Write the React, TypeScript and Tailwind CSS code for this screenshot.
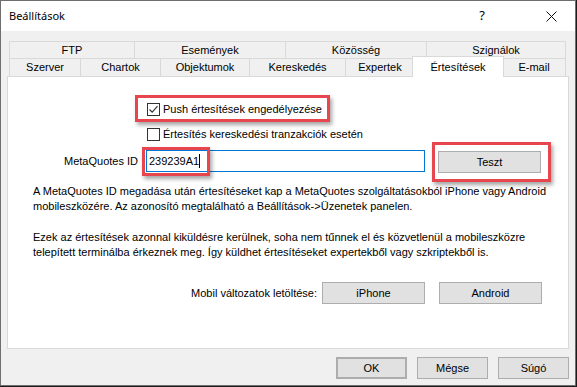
import React from "react";

const Checkbox = ({ checked }: { checked?: boolean }) => (
  <span className="w-[13px] h-[13px] border border-[#333333] bg-white flex items-center justify-center shrink-0">
    {checked && (
      <svg width="11" height="11" viewBox="0 0 11 11">
        <path d="M1.5 5.5 L4.2 8.2 L9.5 2.2" fill="none" stroke="#333" strokeWidth="1.2" />
      </svg>
    )}
  </span>
);

const Highlight = ({ className }: { className: string }) => (
  <span
    className={`absolute border-[3px] border-[#e8464f] shadow-[2px_3px_4px_rgba(0,0,0,0.35)] pointer-events-none ${className}`}
  />
);

const Btn = ({ label, className = "" }: { label: string; className?: string }) => (
  <button className={`h-[22px] bg-[#e1e1e1] border border-[#adadad] text-[11px] text-black flex items-center justify-center ${className}`}>
    {label}
  </button>
);

const topTabs = [
  ["FTP", "w-[125px]"],
  ["Események", "w-[151px]"],
  ["Közösség", "w-[141px]"],
  ["Szignálok", "w-[140px] border-r"],
];

const bottomTabs = [
  ["Szerver", "w-[71px]"],
  ["Chartok", "w-[80px]"],
  ["Objektumok", "w-[89px]"],
  ["Kereskedés", "w-[96px]"],
  ["Expertek", "w-[69px]"],
];

export default function App() {
  return (
    <div className="w-[577px] h-[387px] bg-[#1c1c1c] overflow-hidden font-['Liberation_Sans',Arial,sans-serif] text-black">
      <div className="w-[576px] h-[386px] border border-[#6e6e6e] bg-[#f0f0f0] flex flex-col">
        {/* title bar */}
        <div className="h-[30px] bg-white flex items-center shrink-0">
          <span className="ml-[8px] text-[11px] font-['Noto_Sans',sans-serif]">Beállítások</span>
          <span className="ml-auto mr-[61px] text-[13px] font-['Noto_Sans',sans-serif]">?</span>
          <svg className="mr-[18px]" width="11" height="11" viewBox="0 0 11 11">
            <path d="M0.5 0.5 L10.5 10.5 M10.5 0.5 L0.5 10.5" stroke="#111" strokeWidth="1" />
          </svg>
        </div>

        <div className="pt-[10px] text-[11px]">
          {/* tabs */}
          <div className="ml-[8px] w-[557px]">
            <div className="flex h-[17px]">
              {topTabs.map(([t, w]) => (
                <div key={t} className={`${w} border-l border-t border-[#d9d9d9] flex items-center justify-center`}>
                  {t}
                </div>
              ))}
            </div>
            <div className="flex h-[18px]">
              {bottomTabs.map(([t, w]) => (
                <div key={t} className={`${w} border-l border-t border-[#d9d9d9] flex items-center justify-center`}>
                  {t}
                </div>
              ))}
              <div className="relative z-10 w-[92px] -mx-[2px] -mt-[2px] h-[21px] bg-white border-x border-t border-[#d9d9d9] flex items-start justify-center pt-[2px]">
                Értesítések
              </div>
              <div className="w-[64px] border-l border-t border-r border-[#d9d9d9] flex items-center justify-center">
                E-mail
              </div>
            </div>
          </div>

          {/* panel */}
          <div className="ml-[6px] w-[562px] h-[273px] border border-[#d9d9d9] bg-white">
            <div className="relative ml-[139px] mt-[26px] flex items-center gap-[3px] h-[13px]">
              <Checkbox checked />
              <span>Push értesítések engedélyezése</span>
              <Highlight className="-left-[12px] -top-[8px] w-[195px] h-[27px]" />
            </div>
            <div className="ml-[139px] mt-[12px] flex items-center gap-[3px] h-[13px]">
              <Checkbox />
              <span>Értesítés kereskedési tranzakciók esetén</span>
            </div>

            <div className="mt-[9px] flex items-center h-[22px]">
              <span className="w-[130px] text-right">MetaQuotes ID</span>
              <div className="relative ml-[8px] w-[279px] h-[22px] border border-[#0078d7] flex items-center pl-[2px]">
                <span>239239A1</span>
                <span className="w-px h-[14px] bg-black" />
                <Highlight className="-left-[5px] -top-[4px] w-[68px] h-[29px]" />
              </div>
              <div className="relative ml-[13px] mt-[2px]">
                <Btn label="Teszt" className="w-[103px]" />
                <Highlight className="-left-[6px] -top-[9px] w-[119px] h-[40px]" />
              </div>
            </div>

            <p className="mt-[12px] pl-[25px] pr-[20px] leading-[15px]">
              A MetaQuotes ID megadása után értesítéseket kap a MetaQuotes szolgáltatásokból iPhone vagy Android
              <br />
              mobileszközére. Az azonosító megtalálható a Beállítások-&gt;Üzenetek panelen.
            </p>
            <p className="mt-[16px] pl-[25px] pr-[20px] leading-[15px]">
              Ezek az értesítések azonnal kiküldésre kerülnek, soha nem tűnnek el és közvetlenül a mobileszközre
              <br />
              telepített terminálba érkeznek meg. Így küldhet értesítéseket expertekből vagy szkriptekből is.
            </p>

            <div className="mt-[22px] flex items-center justify-end pr-[26px]">
              <span className="mr-[5px]">Mobil változatok letöltése:</span>
              <Btn label="iPhone" className="w-[103px]" />
              <Btn label="Android" className="w-[103px] ml-[14px]" />
            </div>
          </div>

          {/* dialog buttons */}
          <div className="mt-[8px] flex justify-end gap-[10px] pr-[6px]">
            <Btn label="OK" className="w-[71px] border-2 border-[#0078d7]" />
            <Btn label="Mégse" className="w-[71px]" />
            <Btn label="Súgó" className="w-[71px]" />
          </div>
        </div>
      </div>
    </div>
  );
}
